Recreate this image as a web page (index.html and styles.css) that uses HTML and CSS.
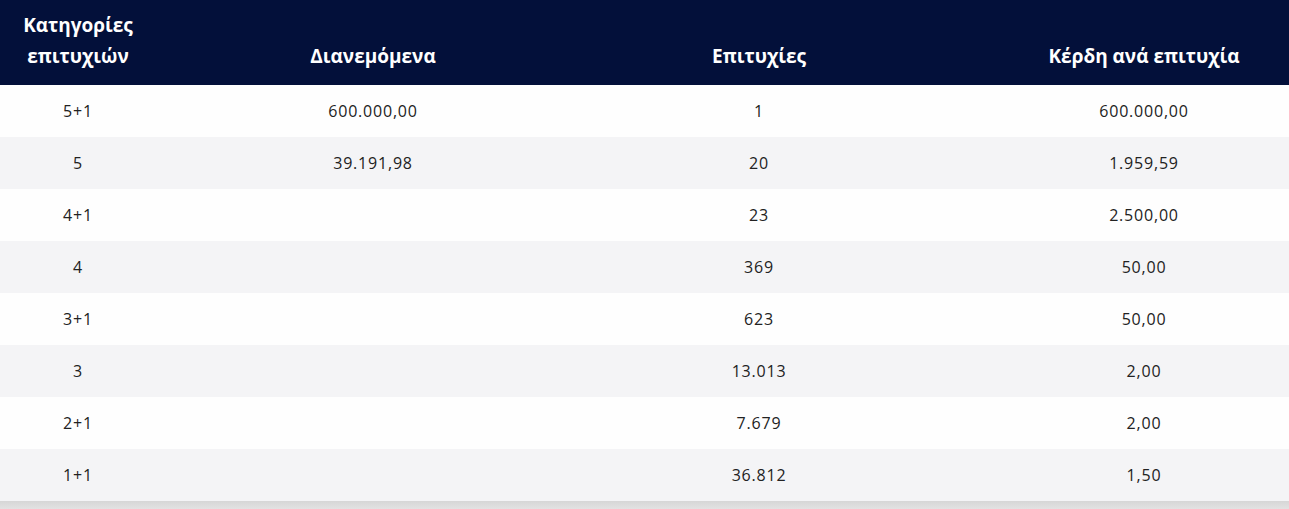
FILE: index.html
```html
<!DOCTYPE html>
<html lang="el">
<head>
<meta charset="utf-8">
<link rel="stylesheet" href="styles.css">
</head>
<body>
<div class="wrap">
<table class="results">
  <colgroup>
    <col class="c1"><col class="c2"><col class="c3"><col class="c4">
  </colgroup>
  <thead>
    <tr>
      <th>Κατηγορίες<br>επιτυχιών</th>
      <th>Διανεμόμενα</th>
      <th>Επιτυχίες</th>
      <th class="last">Κέρδη ανά επιτυχία</th>
    </tr>
  </thead>
  <tbody>
    <tr><td>5+1</td><td>600.000,00</td><td>1</td><td class="last">600.000,00</td></tr>
    <tr><td>5</td><td>39.191,98</td><td>20</td><td class="last">1.959,59</td></tr>
    <tr><td>4+1</td><td></td><td>23</td><td class="last">2.500,00</td></tr>
    <tr><td>4</td><td></td><td>369</td><td class="last">50,00</td></tr>
    <tr><td>3+1</td><td></td><td>623</td><td class="last">50,00</td></tr>
    <tr><td>3</td><td></td><td>13.013</td><td class="last">2,00</td></tr>
    <tr><td>2+1</td><td></td><td>7.679</td><td class="last">2,00</td></tr>
    <tr><td>1+1</td><td></td><td>36.812</td><td class="last">1,50</td></tr>
  </tbody>
</table>
<div class="shade"></div>
</div>
</body>
</html>
```

FILE: styles.css
```css
html, body {
  margin: 0;
  padding: 0;
  background: #ffffff;
}
.wrap {
  width: 1289px;
}
.results {
  width: 1289px;
  border-collapse: collapse;
  table-layout: fixed;
  font-family: "Open Sans", "Noto Sans", sans-serif;
  color: #222222;
}
.c1 { width: 156px; }
.c2 { width: 434px; }
.c3 { width: 338px; }
.c4 { width: 361px; }
.results thead tr {
  background: #03103a;
  height: 85px;
}
.results th {
  color: #ffffff;
  font-weight: 700;
  font-size: 19px;
  line-height: 31px;
  text-align: center;
  vertical-align: bottom;
  padding: 0 0 13px 0;
}
.results td {
  height: 52px;
  padding: 0;
  text-align: center;
  vertical-align: middle;
  font-size: 16px;
  letter-spacing: 0.8px;
}
.results .last {
  padding-left: 71px;
}
.results tbody tr:nth-child(odd) { background: #fefefe; }
.results tbody tr:nth-child(even) { background: #f4f4f6; }
.shade {
  height: 8px;
  background: linear-gradient(#d6d6d6, #e2e2e2);
}
```
